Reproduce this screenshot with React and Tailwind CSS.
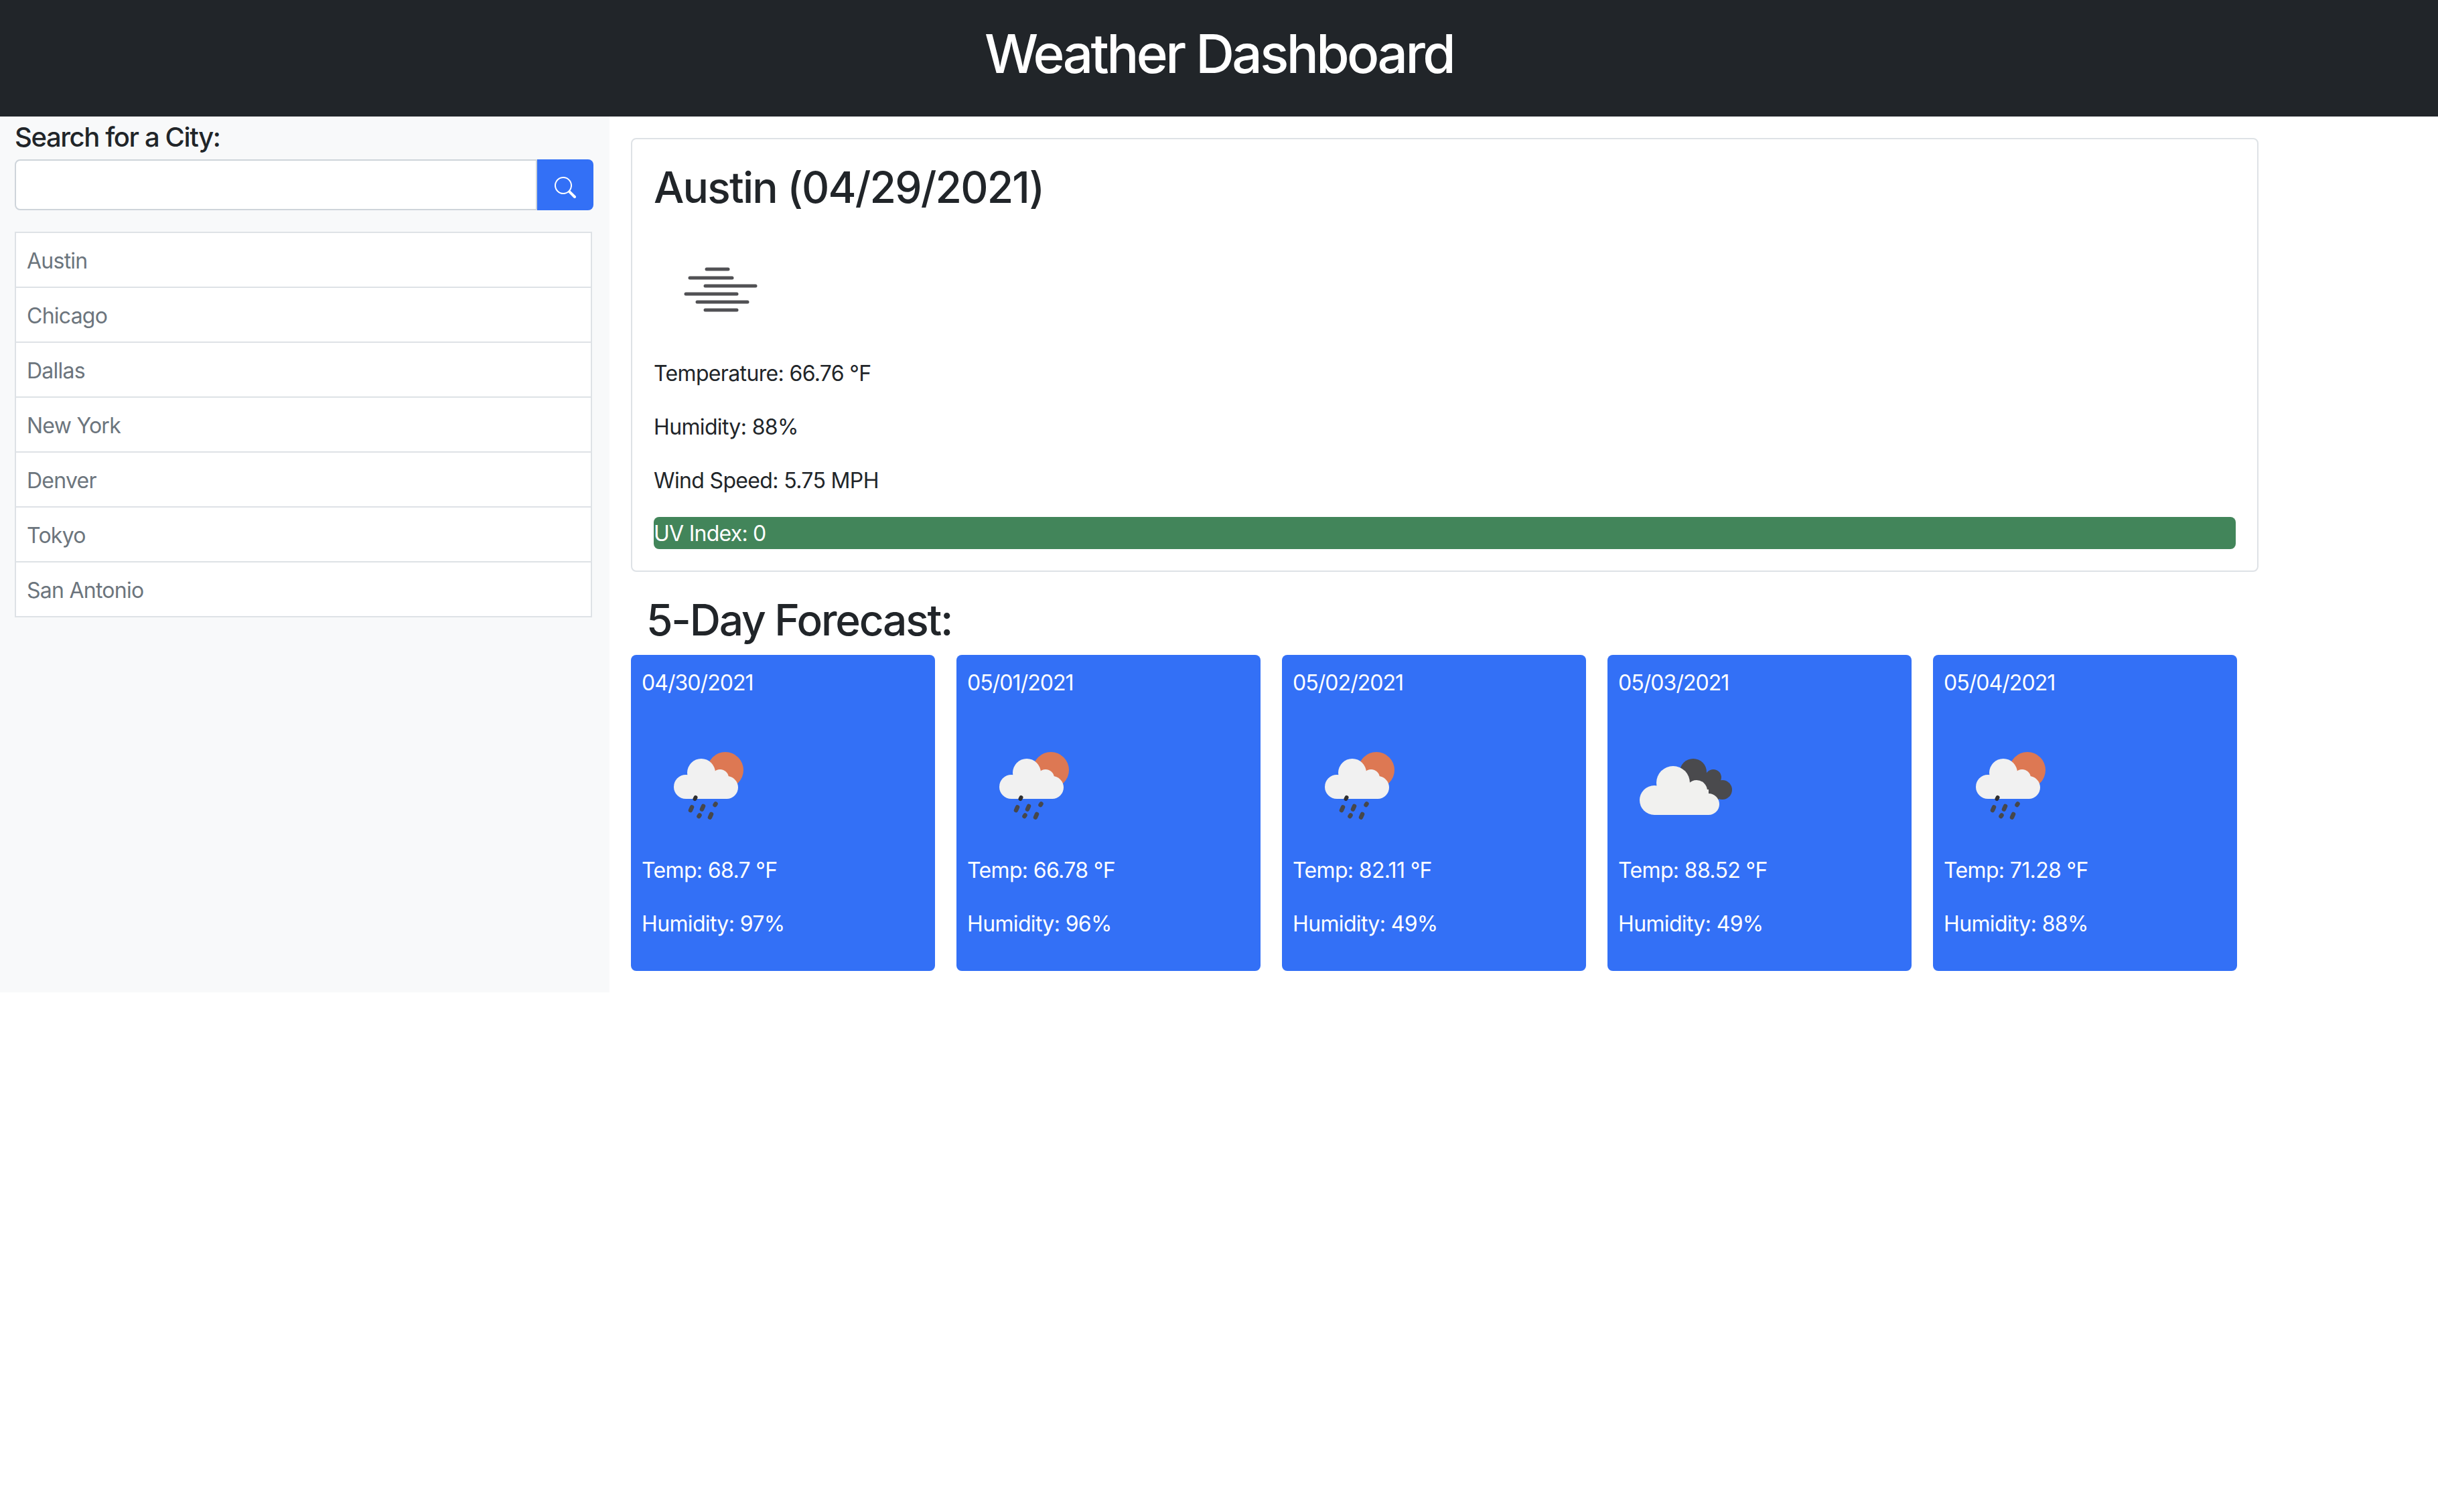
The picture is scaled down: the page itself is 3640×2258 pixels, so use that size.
const CITIES = ['Austin', 'Chicago', 'Dallas', 'New York', 'Denver', 'Tokyo', 'San Antonio'];

const FORECAST = [
  { date: '04/30/2021', icon: 'rain', temp: '68.7', humidity: '97' },
  { date: '05/01/2021', icon: 'rain', temp: '66.78', humidity: '96' },
  { date: '05/02/2021', icon: 'rain', temp: '82.11', humidity: '49' },
  { date: '05/03/2021', icon: 'clouds', temp: '88.52', humidity: '49' },
  { date: '05/04/2021', icon: 'rain', temp: '71.28', humidity: '88' },
];

function FogIcon() {
  const bars = [
    [77, 113, 70],
    [52, 119, 83],
    [75, 154, 95],
    [46, 126, 107],
    [63, 142, 119],
    [75, 126, 131],
  ];
  return (
    <svg className="block h-[200px] w-[200px]" viewBox="0 0 200 200">
      {bars.map(([x1, x2, y]) => (
        <line key={y} x1={x1 + 2} x2={x2 - 2} y1={y} y2={y} stroke="#515154" strokeWidth="5" strokeLinecap="round" />
      ))}
    </svg>
  );
}

function RainIcon() {
  return (
    <svg className="block h-[200px] w-[200px]" viewBox="0 0 200 200">
      <circle cx="125" cy="76" r="27" fill="#dd7853" />
      <g fill="#f1f1f1">
        <circle cx="66" cy="101" r="18" />
        <circle cx="89" cy="80" r="21" />
        <circle cx="117" cy="88" r="13" />
        <circle cx="127" cy="102" r="17" />
        <rect x="66" y="84" width="62" height="35" />
      </g>
      <g stroke="#47474a" strokeLinecap="round" fill="none">
        <line x1="80.5" y1="117" x2="79.5" y2="119" strokeWidth="6" stroke="#2e2e30" />
        <line x1="75" y1="131.5" x2="73" y2="136" strokeWidth="6.5" />
        <line x1="92" y1="130" x2="90" y2="134.5" strokeWidth="6.5" />
        <line x1="110.5" y1="126.5" x2="109.5" y2="128" strokeWidth="6.5" />
        <line x1="86.5" y1="143.5" x2="85.5" y2="145" strokeWidth="6.5" />
        <line x1="104" y1="142" x2="102" y2="146.5" strokeWidth="6.5" />
      </g>
    </svg>
  );
}

function CloudsIcon() {
  return (
    <svg className="block h-[200px] w-[200px]" viewBox="0 0 200 200">
      <g fill="#4a4a4d">
        <circle cx="112" cy="79" r="20" />
        <circle cx="142" cy="87" r="12" />
        <circle cx="155.5" cy="105.5" r="14.5" />
        <rect x="105" y="80" width="45" height="40" />
      </g>
      <g fill="#f1f1ef">
        <circle cx="54" cy="121" r="22" />
        <circle cx="82" cy="95" r="25" />
        <circle cx="117" cy="107" r="16" />
        <circle cx="135" cy="127" r="16" />
        <rect x="54" y="105" width="81" height="38" />
      </g>
    </svg>
  );
}

function ForecastCard({ day }) {
  return (
    <div className="w-[454px] rounded-[8px] bg-[#3370f6] p-4 text-white">
      <p className="mb-8 h-[48px] text-[32px] leading-[52px] tracking-[-0.95px]">{day.date}</p>
      {day.icon === 'rain' ? <RainIcon /> : <CloudsIcon />}
      <p className="mb-8 h-[48px] text-[32px] leading-[52px] tracking-[-0.65px]">Temp: {day.temp} °F</p>
      <p className="mb-8 h-[48px] text-[32px] leading-[52px] tracking-[-0.65px]">Humidity: {day.humidity}%</p>
    </div>
  );
}

export default function App() {
  return (
    <div className="min-h-[2258px] bg-white font-['Inter',sans-serif] text-[#212529]">
      <header className="flex h-[174px] items-center justify-center bg-[#212529] pb-[14px]">
        <h1 className="text-[80px] font-medium leading-[96px] tracking-[-3.6px] text-white">Weather Dashboard</h1>
      </header>

      <div className="flex">
        <aside className="w-[910px] bg-[#f8f9fa] pl-[22px] pr-[24px]">
          <h5 className="mb-4 h-[48px] text-[40px] font-medium leading-[62px] tracking-[-1.4px]">Search for a City:</h5>
          <div className="flex h-[76px] w-[864px]">
            <input
              type="text"
              className="h-full w-[780px] rounded-l-[8px] border-2 border-[#ced4da] bg-white px-6 text-[32px] outline-none"
            />
            <button type="button" className="flex h-full w-[84px] items-center justify-center rounded-r-[8px] bg-[#3370f6] pt-[8px] text-white">
              <svg className="h-8 w-8" viewBox="0 0 16 16" fill="currentColor">
                <path d="M11.742 10.344a6.5 6.5 0 1 0-1.397 1.398h-.001c.03.04.062.078.098.115l3.85 3.85a1 1 0 0 0 1.415-1.414l-3.85-3.85a1.007 1.007 0 0 0-.115-.1zM12 6.5a5.5 5.5 0 1 1-11 0 5.5 5.5 0 0 1 11 0z" />
              </svg>
            </button>
          </div>
          <ul className="mt-8 w-[862px] border-b-2 border-[#dee2e6]">
            {CITIES.map((city) => (
              <li
                key={city}
                className="h-[82px] border-x-2 border-t-2 border-[#dee2e6] bg-white px-4 text-[32px] leading-[84px] tracking-[-0.75px] text-[#6c757d]"
              >
                {city}
              </li>
            ))}
          </ul>
        </aside>

        <main className="pl-8 pt-8 pb-[32px]">
          <section className="w-[2430px] rounded-[8px] border-2 border-[#dee2e6] p-8">
            <h2 className="mb-4 h-[76px] text-[64px] font-medium leading-[80px] tracking-[-1.8px]">Austin (04/29/2021)</h2>
            <FogIcon />
            <p className="mb-8 h-[48px] text-[32px] leading-[52px] tracking-[-0.65px]">Temperature: 66.76 °F</p>
            <p className="mb-8 h-[48px] text-[32px] leading-[52px] tracking-[-0.65px]">Humidity: 88%</p>
            <p className="mb-8 h-[48px] text-[32px] leading-[52px] tracking-[-0.65px]">Wind Speed: 5.75 MPH</p>
            <p className="h-[48px] rounded-[8px] bg-[#42855a] text-[32px] leading-[50px] tracking-[-0.75px] text-white">UV Index: 0</p>
          </section>

          <h3 className="mb-[14px] ml-[23px] mt-[34px] text-[64px] font-medium leading-[76px] tracking-[-2.2px]">5-Day Forecast:</h3>
          <div className="flex gap-8">
            {FORECAST.map((day) => (
              <ForecastCard key={day.date} day={day} />
            ))}
          </div>
        </main>
      </div>
    </div>
  );
}
